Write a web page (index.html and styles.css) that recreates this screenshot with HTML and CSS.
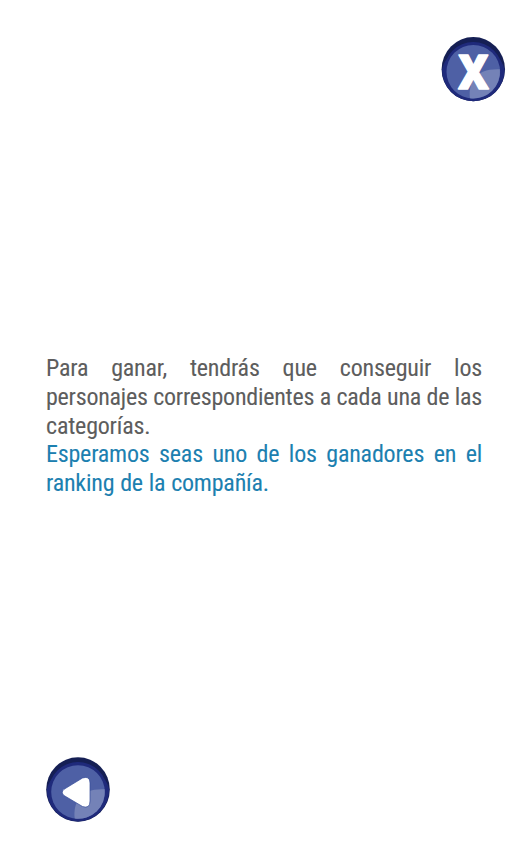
FILE: index.html
```html
<!DOCTYPE html>
<html lang="es">
<head>
<meta charset="utf-8">
<title>Cómo ganar</title>
<link rel="stylesheet" href="styles.css">
</head>
<body>
<main class="screen">
  <button class="round-button close" aria-label="Cerrar">
    <svg viewBox="0 0 64 65" width="64" height="65">
      <ellipse class="rim-dark" cx="32.3" cy="32.2" rx="31.7" ry="32.1"/>
      <path class="rim" d="M1 32.5a31.3 31.8 0 0 0 62.6 0Q60 16 32.3 5Q4 16 1 32.5z"/>
      <ellipse class="rim" cx="32.3" cy="34.3" rx="29.4" ry="29.2"/>
      <circle class="face" cx="32.3" cy="34.7" r="26.8"/>
      <path class="shine" d="M28.9 61.3C27 45 35.2 31 58.9 32.2A26.8 26.8 0 0 1 28.9 61.3z"/>
      <text class="cross" x="17.3" y="52.2" textLength="30.4" lengthAdjust="spacingAndGlyphs">X</text>
    </svg>
  </button>
  <section class="message">
    <p class="goal">Para ganar, tendrás que conseguir los <span class="tight">personajes correspondientes a cada una de las</span> categorías.</p>
    <p class="wish">Esperamos seas uno de los ganadores en el ranking de la compañía.</p>
  </section>
  <button class="round-button back" aria-label="Volver">
    <svg viewBox="0 0 64 65" width="64" height="65">
      <ellipse class="rim-dark" cx="32" cy="32.5" rx="31.8" ry="32.3"/>
      <path class="rim" d="M0.8 32.5a31.2 31.9 0 0 0 62.4 0Q60 16 32 5Q4 16 .8 32.5z"/>
      <ellipse class="rim" cx="32" cy="34.3" rx="29.4" ry="29.2"/>
      <circle class="face" cx="32" cy="35" r="26.8"/>
      <path class="shine" d="M28.7 61.6C26.8 45 35 31 58.7 32.3A26.8 26.8 0 0 1 28.7 61.6z"/>
      <path class="arrow" d="M18 32.3L36.5 21Q44 18.5 44 26V44Q44 52 36.5 49.5L18 38.5Q14.5 35.4 18 32.3z"/>
    </svg>
  </button>
</main>
</body>
</html>
```
FILE: styles.css
```css
* { box-sizing: border-box; }
body { margin: 0; background: #fff; }
.screen {
  display: flex;
  flex-direction: column;
  justify-content: space-between;
  height: 861px;
  padding: 37px 20px 39px 46px;
}
.round-button {
  width: 64px;
  height: 65px;
  padding: 0;
  border: 0;
  background: none;
  cursor: pointer;
}
.round-button svg { display: block; overflow: visible; }
.close { align-self: flex-end; }
.back { align-self: flex-start; }
.message {
  width: 436px;
  margin-top: -7px;
  font: 24px/28.8px "Roboto Condensed", Roboto, sans-serif;
  font-stretch: 75%;
  letter-spacing: -.2px;
  word-spacing: .5px;
  text-align: justify;
  -webkit-text-stroke: .08px currentColor;
}
.message p { margin: 0; }
.tight { letter-spacing: -.24px; word-spacing: -1px; }
.goal { color: #5d5d5d; }
.wish { color: #1c80b0; }
.rim-dark { fill: #151f54; }
.rim { fill: #1f2a7b; }
.face { fill: #4e60a5; }
.shine { fill: #7482b7; }
.cross {
  font: 800 48px/1 "Open Sans", sans-serif;
  fill: #fff;
  stroke: #fff;
  stroke-width: 1.5px;
  stroke-linejoin: round;
}
.arrow { fill: #fff; stroke: #344b98; stroke-width: .7px; }
```
